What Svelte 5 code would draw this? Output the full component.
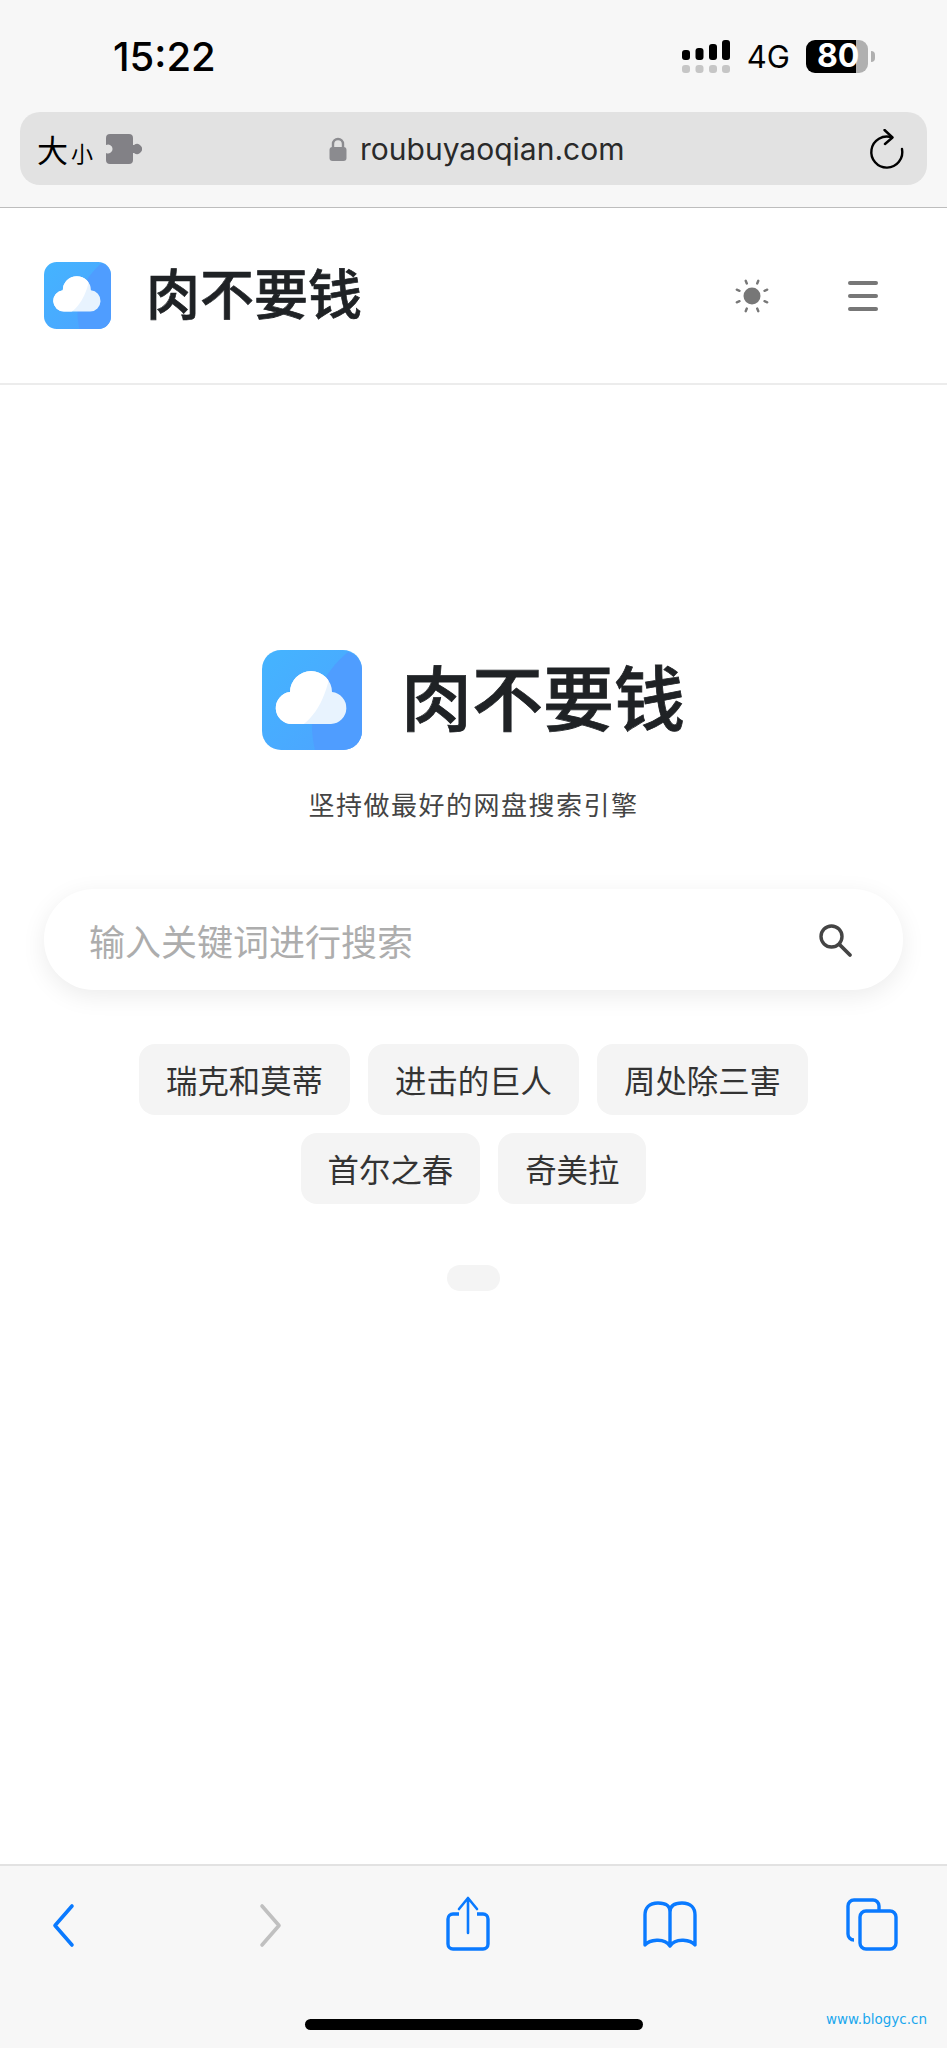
<script>
  const chipRows = [
    ['瑞克和莫蒂', '进击的巨人', '周处除三害'],
    ['首尔之春', '奇美拉'],
  ];
</script>

{#snippet logo()}
  <svg class="logo-svg" viewBox="0 0 100 100">
    <defs>
      <linearGradient id="logo-bg" x1="0" y1="0" x2="1" y2="1">
        <stop offset="0" stop-color="#44b4ff" />
        <stop offset="1" stop-color="#4da3ff" />
      </linearGradient>
      <clipPath id="logo-white">
        <path d="M0 0H72C66 50 54 66 34 80H0Z" />
      </clipPath>
    </defs>
    <rect width="100" height="100" rx="19" fill="url(#logo-bg)" />
    <path d="M86 2C62 22 42 55 53 100H81A19 19 0 0 0 100 81V19A19 19 0 0 0 86 2Z" fill="#4f9dff" />
    <path d="M30 74A16 16 0 0 1 28 42.100A21 21 0 0 1 70 42.100A16 16 0 0 1 69 74Z" fill="#e8f3fe" />
    <path d="M30 74A16 16 0 0 1 28 42.100A21 21 0 0 1 70 42.100A16 16 0 0 1 69 74Z" fill="#fff" clip-path="url(#logo-white)" />
  </svg>
{/snippet}

<div class="page">
  <div class="safari-top">
    <div class="status">
      <span class="time">15:22</span>
      <div class="status-right">
        <svg class="signal" width="50" height="36" viewBox="0 0 50 36">
          <rect x="0" y="10" width="8" height="10" rx="3" fill="#000" />
          <rect x="13.500" y="8" width="8" height="12" rx="3" fill="#000" />
          <rect x="27" y="4" width="8" height="16" rx="3" fill="#000" />
          <rect x="40" y="0" width="8" height="20" rx="3" fill="#000" />
          <rect x="0" y="25" width="8" height="8" rx="3" fill="#c6c6c6" />
          <rect x="13.500" y="25" width="8" height="8" rx="3" fill="#c6c6c6" />
          <rect x="27" y="25" width="8" height="8" rx="3" fill="#c6c6c6" />
          <rect x="40" y="25" width="8" height="8" rx="3" fill="#c6c6c6" />
        </svg>
        <span class="net">4G</span>
        <div class="battery">
          <div class="battery-body"><span class="battery-level">80</span></div>
          <span class="battery-nub"></span>
        </div>
      </div>
    </div>

    <div class="address">
      <div class="addr-left">
        <span class="aa-big">大</span><span class="aa-small">小</span>
        <svg class="puzzle" width="36" height="30" viewBox="0 0 36 30">
          <path d="M4 0H23A4 4 0 0 1 27 4V11L28 11A5 5 0 1 1 28 19L27 19V26A4 4 0 0 1 23 30H4A4 4 0 0 1 0 26V19A4.500 4.500 0 1 0 0 11V4A4 4 0 0 1 4 0Z" fill="#828186" />
        </svg>
      </div>
      <div class="addr-url">
        <svg width="18" height="24" viewBox="0 0 18 24">
          <path d="M4 11V7A5 5 0 0 1 14 7V11" fill="none" stroke="#8b8b8f" stroke-width="2.400" />
          <rect x="0.500" y="10" width="17" height="14" rx="3" fill="#8b8b8f" />
        </svg>
        <span>roubuyaoqian.com</span>
      </div>
      <svg class="reload" width="36" height="40" viewBox="0 0 36 40">
        <path d="M23 8.500A15.500 15.500 0 1 0 33 20" fill="none" stroke="#000" stroke-width="2.400" stroke-linecap="round" />
        <path d="M15.500 1L23.500 8.500L16 15" fill="none" stroke="#000" stroke-width="2.400" stroke-linecap="round" stroke-linejoin="round" />
      </svg>
    </div>
  </div>

  <header class="site-head">
    <div class="brand">
      {@render logo()}
      <span class="brand-name">肉不要钱</span>
    </div>
    <div class="head-actions">
      <svg width="36" height="36" viewBox="0 0 36 36">
        <circle cx="18" cy="18" r="8.500" fill="#777" />
        <path d="M12.800 5.500L11.700 2.800M23.200 5.500L24.300 2.800M12.800 30.500L11.700 33.200M23.200 30.500L24.300 33.200M5.500 12.800L2.800 11.700M5.500 23.200L2.800 24.300M30.500 12.800L33.200 11.700M30.500 23.200L33.200 24.300" stroke="#777" stroke-width="2.400" stroke-linecap="round" />
      </svg>
      <div class="menu"><i></i><i></i><i></i></div>
    </div>
  </header>

  <main class="hero">
    <div class="hero-brand">
      {@render logo()}
      <h1>肉不要钱</h1>
    </div>
    <p class="slogan">坚持做最好的网盘搜索引擎</p>

    <div class="search">
      <input type="text" placeholder="输入关键词进行搜索" />
      <svg width="36" height="36" viewBox="0 0 36 36">
        <circle cx="14.500" cy="14.500" r="10.500" fill="none" stroke="#444" stroke-width="3.400" />
        <path d="M22.500 22.500L33 33" stroke="#444" stroke-width="3.800" stroke-linecap="round" />
      </svg>
    </div>

    {#each chipRows as row}
      <div class="chips">
        {#each row as chip}
          <span class="chip">{chip}</span>
        {/each}
      </div>
    {/each}

    <div class="pill"></div>
  </main>

  <footer class="safari-bottom">
    <nav class="toolbar">
      <svg viewBox="0 0 60 60">
        <path d="M38 11L21 30.500L38 50" fill="none" stroke="#0a7aff" stroke-width="3.600" stroke-linecap="round" stroke-linejoin="round" />
      </svg>
      <svg viewBox="0 0 60 60">
        <path d="M26 11L43 30.500L26 50" fill="none" stroke="#c0c0c0" stroke-width="3.600" stroke-linecap="round" stroke-linejoin="round" />
      </svg>
      <svg viewBox="0 0 60 60">
        <path d="M21 19H15A5 5 0 0 0 10 24V49A5 5 0 0 0 15 54H45A5 5 0 0 0 50 49V24A5 5 0 0 0 45 19H39" fill="none" stroke="#0a7aff" stroke-width="3.400" />
        <path d="M30 38V4M21 14L30 3L39 14" fill="none" stroke="#0a7aff" stroke-width="2.600" stroke-linecap="round" stroke-linejoin="round" />
      </svg>
      <svg viewBox="0 0 60 60">
        <path d="M30 17C30 10 25 8 18 8C9 8 5 13 5 20V50C9 45 24 42 30 51C36 42 51 45 55 50V20C55 13 51 8 42 8C35 8 30 10 30 17V51" fill="none" stroke="#0a7aff" stroke-width="3.400" stroke-linejoin="round" />
      </svg>
      <svg viewBox="0 0 60 60">
        <path d="M12 45A6 6 0 0 1 6 39V11A6 6 0 0 1 12 5H31A6 6 0 0 1 37 11V16" fill="none" stroke="#0a7aff" stroke-width="3.400" />
        <rect x="18" y="16" width="36" height="38" rx="6" fill="none" stroke="#0a7aff" stroke-width="3.400" />
      </svg>
    </nav>
    <div class="home-row">
      <div class="home-bar"></div>
      <span class="watermark">www.blogyc.cn</span>
    </div>
  </footer>
</div>

<style>
  :global(body) {
    margin: 0;
    background: #fff;
  }

  .page {
    display: flex;
    flex-direction: column;
    height: 2048px;
    font-family: 'Noto Sans CJK SC', sans-serif;
    overflow: hidden;
  }

  .safari-top {
    height: 207px;
    background: #f7f7f7;
    border-bottom: 1px solid #bdbdbd;
    padding: 0 20px;
  }

  .status {
    display: flex;
    justify-content: space-between;
    align-items: center;
    height: 112px;
    padding: 0 52px 0 93px;
  }

  .time {
    font-family: Inter, 'Liberation Sans', sans-serif;
    font-size: 40px;
    font-weight: 500;
    color: #000;
  }

  .status-right {
    display: flex;
    align-items: center;
  }

  .signal {
    margin-top: 4px;
  }

  .net {
    margin-left: 15px;
    font-family: Inter, 'Liberation Sans', sans-serif;
    font-size: 31px;
    color: #000;
  }

  .battery {
    display: flex;
    align-items: center;
    margin-left: 16px;
  }

  .battery-body {
    width: 62px;
    height: 33px;
    border-radius: 9px;
    background: linear-gradient(90deg, #000 0 50px, #b0b0b0 50px);
    display: flex;
    align-items: center;
    padding-left: 11px;
    box-sizing: border-box;
  }

  .battery-level {
    font-family: Inter, 'Liberation Sans', sans-serif;
    font-size: 32px;
    font-weight: 700;
    color: #fff;
    line-height: 1;
  }

  .battery-nub {
    width: 4px;
    height: 11px;
    margin-left: 3px;
    border-radius: 0 6px 6px 0;
    background: #b0b0b0;
  }

  .address {
    position: relative;
    display: flex;
    justify-content: space-between;
    align-items: center;
    height: 73px;
    padding: 0 22px 0 17px;
    background: #e2e2e2;
    border-radius: 20px;
  }

  .addr-left {
    display: flex;
    align-items: center;
    color: #000;
  }

  .aa-big {
    font-size: 31px;
  }

  .aa-small {
    margin: 6px 0 0 3px;
    font-size: 22px;
  }

  .puzzle {
    margin-left: 13px;
  }

  .addr-url {
    position: absolute;
    left: 309px;
    top: 0;
    height: 100%;
    display: flex;
    align-items: center;
    gap: 13px;
    font-family: Inter, 'Liberation Sans', sans-serif;
    font-size: 30px;
    color: #2a2a2a;
  }

  .site-head {
    display: flex;
    justify-content: space-between;
    align-items: center;
    height: 177px;
    padding: 0 69px 0 44px;
    border-bottom: 2px solid #ececec;
    box-sizing: border-box;
  }

  .brand {
    display: flex;
    align-items: flex-start;
    gap: 35px;
  }

  .brand .logo-svg {
    width: 67px;
    height: 67px;
  }

  .logo-svg {
    display: block;
  }

  .brand-name {
    font-size: 54px;
    line-height: 60px;
    font-weight: 500;
    color: #1f2225;
    -webkit-text-stroke: 0.7px #1f2225;
  }

  .head-actions {
    display: flex;
    align-items: center;
    gap: 78px;
  }

  .menu {
    display: flex;
    flex-direction: column;
    gap: 9px;
    width: 30px;
  }

  .menu i {
    display: block;
    height: 4px;
    border-radius: 2px;
    background: #777;
  }

  .hero {
    flex: 1;
    display: flex;
    flex-direction: column;
    align-items: center;
    padding: 265px 44px 0;
  }

  .hero-brand {
    display: flex;
    align-items: flex-start;
    gap: 39px;
  }

  .hero-brand .logo-svg {
    width: 100px;
    height: 100px;
  }

  h1 {
    margin: 0;
    font-size: 71px;
    line-height: 88px;
    font-weight: 500;
    color: #1f2225;
    -webkit-text-stroke: 0.8px #1f2225;
  }

  .slogan {
    margin: 35px 0 0;
    font-size: 26px;
    line-height: 38px;
    letter-spacing: 1.500px;
    color: #444;
  }

  .search {
    display: flex;
    justify-content: space-between;
    align-items: center;
    width: 100%;
    height: 101px;
    margin: 66px 0 54px;
    padding: 0 50px 0 45px;
    box-sizing: border-box;
    border-radius: 50px;
    background: #fff;
    box-shadow: 0 6px 24px rgba(0, 0, 0, 0.08);
  }

  .search input {
    flex: 1;
    min-width: 0;
    border: none;
    outline: none;
    padding: 0;
    background: none;
    font-family: inherit;
    font-size: 36px;
  }

  .search input::placeholder {
    color: #adadad;
    opacity: 1;
  }

  .chips {
    display: flex;
    justify-content: center;
    gap: 18px;
    margin-bottom: 18px;
  }

  .chip {
    padding: 0 27px;
    height: 71px;
    display: flex;
    align-items: center;
    border-radius: 16px;
    background: #f4f4f4;
    font-size: 31.400px;
    line-height: 66px;
    color: #333;
  }

  .pill {
    width: 53px;
    height: 26px;
    margin-top: 43px;
    border-radius: 13px;
    background: #f4f4f4;
  }

  .safari-bottom {
    height: 184px;
    background: #f7f7f7;
    border-top: 2px solid #e2e2e2;
    box-sizing: border-box;
  }

  .toolbar {
    display: flex;
    justify-content: space-between;
    height: 124px;
    padding: 29px 45px 0 34px;
    box-sizing: border-box;
  }

  .toolbar svg {
    width: 60px;
    height: 60px;
  }

  .home-row {
    position: relative;
    display: flex;
    justify-content: center;
    padding-top: 29px;
  }

  .home-bar {
    width: 338px;
    height: 11px;
    border-radius: 6px;
    background: #000;
  }

  .watermark {
    position: absolute;
    right: 20px;
    top: 21px;
    font-family: 'DejaVu Sans', sans-serif;
    font-size: 13.500px;
    color: #1aa7ee;
  }
</style>
